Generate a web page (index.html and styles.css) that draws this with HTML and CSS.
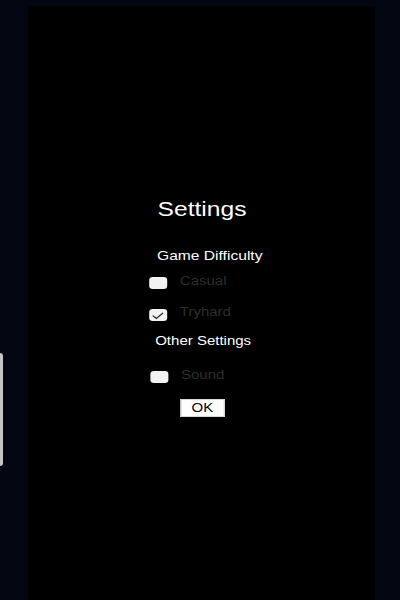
FILE: index.html
```html
<!DOCTYPE html>
<html>
<head>
<meta charset="utf-8">
<link rel="stylesheet" href="styles.css">
</head>
<body>
<div class="side-tab"></div>
<main class="panel">
  <div class="dialog">
    <h1 class="title">Settings</h1>
    <div class="section section-difficulty">Game Difficulty</div>
    <label class="option option-casual"><span class="box"></span><span class="opt-label">Casual</span></label>
    <label class="option option-tryhard"><span class="box"><svg class="check" viewBox="0 0 15 12" width="15" height="12"><path d="M3 6.6 L6 9.4 L11.6 3.8" fill="none" stroke="#2a2a2a" stroke-width="1.2"/></svg></span><span class="opt-label">Tryhard</span></label>
    <div class="section section-other">Other Settings</div>
    <label class="option option-sound"><span class="box"></span><span class="opt-label">Sound</span></label>
    <button class="ok">OK</button>
  </div>
</main>
</body>
</html>
```
FILE: styles.css
```css
html, body {
  margin: 0;
  padding: 0;
}
body {
  background: #020611;
  width: 400px;
  height: 600px;
  overflow: hidden;
  font-family: "Liberation Sans", Arial, sans-serif;
  position: relative;
}
.side-tab {
  position: absolute;
  left: 0;
  top: 353px;
  width: 3px;
  height: 113px;
  background: #c4c4c4;
  border-radius: 0 3px 3px 0;
}
.panel {
  margin: 6px 0 0 28px;
  width: 347px;
  height: 594px;
  background: #000;
  padding-top: 191px;
  box-sizing: border-box;
}
.dialog {
  width: 120px;
  margin: 0 auto;
  transform: scaleX(1.2);
  transform-origin: 50% 0;
  display: flex;
  flex-direction: column;
  align-items: flex-start;
}
.title {
  margin: 0;
  width: 100%;
  text-align: center;
  font-weight: normal;
  font-size: 20.5px;
  line-height: 24px;
  color: #fff;
}
.section {
  font-size: 12.5px;
  line-height: 16px;
  color: #fff;
}
.section-difficulty {
  font-size: 13px;
  margin-top: 26.5px;
  margin-left: 22.5px;
}
.section-other {
  margin-top: 12px;
  margin-left: 21px;
}
.option {
  display: flex;
  align-items: flex-start;
  font-size: 12.5px;
  line-height: 16px;
}
.option-casual {
  margin-top: 9px;
  margin-left: 15.5px;
}
.option-tryhard {
  margin-top: 15px;
  margin-left: 15.5px;
}
.option-sound {
  margin-top: 18px;
  margin-left: 16.5px;
}
.box {
  width: 15px;
  height: 12px;
  margin-top: 4.5px;
  background: #f2f2f2;
  border-radius: 3px;
  display: block;
  flex: none;
}
.check {
  display: block;
}
.opt-label {
  margin-left: 11px;
  color: #2e2e2e;
}
.ok {
  margin-top: 15.5px;
  margin-left: 41.5px;
  width: 37.5px;
  height: 18px;
  padding: 0;
  border: 1px solid #d8d8d8;
  background: #fff;
  color: #000;
  font-family: "Liberation Sans", Arial, sans-serif;
  font-size: 12.5px;
  line-height: 16px;
}
```
